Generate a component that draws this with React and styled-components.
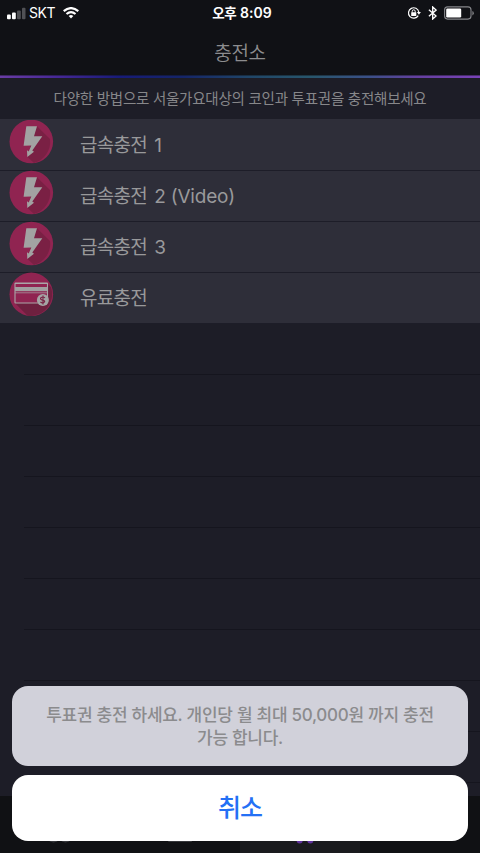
import React from "react";
import styled, { createGlobalStyle } from "styled-components";

const GlobalStyle = createGlobalStyle`
  * { box-sizing: border-box; }
  body {
    margin: 0;
    background: #1d1d27;
    font-family: Inter, "Noto Sans CJK KR", sans-serif;
  }
`;

const Screen = styled.div`
  position: relative;
  display: flex;
  flex-direction: column;
  width: 480px;
  height: 853px;
  overflow: hidden;
  background: #1d1d27;
`;

const StatusBar = styled.header`
  display: grid;
  grid-template-columns: 1fr auto 1fr;
  align-items: center;
  height: 25px;
  padding: 0 6px 0 7px;
  background: #101115;
  color: #fff;
`;

const StatusGroup = styled.div`
  display: flex;
  align-items: center;
  justify-content: ${(p) => (p.$end ? "flex-end" : "flex-start")};
  height: 25px;
`;

const Carrier = styled.span`
  margin: 0 8px 0 3px;
  font-size: 14px;
  line-height: 24px;
  letter-spacing: -0.4px;
`;

const Clock = styled.time`
  padding-left: 3px;
  font-size: 14px;
  font-weight: 600;
  line-height: 25px;
  white-space: nowrap;
`;

const Meridiem = styled.span`
  margin-right: 4px;
  font-size: 13.5px;
  letter-spacing: -0.5px;
`;

const NavBar = styled.div`
  height: 50px;
  padding-top: 2px;
  background: #101115;
  color: #8d8d8f;
  font-size: 19px;
  font-weight: 350;
  line-height: 53px;
  letter-spacing: -0.3px;
  text-align: center;
`;

const GradientLine = styled.div`
  height: 3px;
  flex: none;
  background: linear-gradient(90deg, #6a3da5 0%, #462896 12%, #171b78 25%, #152568 38%, #204668 52%, #28566c 65%, #3b5088 77%, #6540a0 87%, #7a43b8 100%);
  border-top: 1px solid rgba(16, 17, 21, 0.45);
`;

const Intro = styled.p`
  flex: none;
  height: 41px;
  margin: 0;
  color: #87878a;
  font-size: 14.5px;
  line-height: 41px;
  letter-spacing: -0.24px;
  text-align: center;
  white-space: nowrap;
`;

const List = styled.ul`
  flex: 1;
  min-height: 0;
  margin: 0;
  padding: 0;
  overflow: hidden;
  border-top: 1px solid #2e2e39;
  list-style: none;
`;

const Row = styled.li`
  display: flex;
  align-items: flex-start;
  height: 51px;
  padding-left: 9px;
  background: #2e2e39;
  border-bottom: 1px solid #1d1d28;
  color: #99999b;
`;

const RowBadge = styled.div`
  flex: none;
  margin-top: -1px;
`;

const RowLabel = styled.span`
  margin-left: 26px;
  font-size: 19px;
  line-height: 52px;
  letter-spacing: -0.7px;
  white-space: nowrap;
`;

const RowSuffix = styled.span`
  margin-left: 7px;
  font-size: 19px;
  letter-spacing: -0.2px;
`;

const EmptyRow = styled.li`
  height: 51px;
  margin-left: 24px;
  border-bottom: 1px solid #15151e;
`;

const TabBar = styled.nav`
  display: grid;
  grid-template-columns: repeat(4, 1fr);
  flex: none;
  height: 57px;
  background: #101114;
`;

const Tab = styled.div`
  display: flex;
  align-items: flex-start;
  justify-content: center;
  padding-top: 24px;
  background: ${(p) => (p.$active ? "#1a1b1e" : "transparent")};
`;

const ActionSheet = styled.div`
  position: absolute;
  left: 12px;
  right: 12px;
  bottom: 12px;
  display: flex;
  flex-direction: column;
  gap: 9px;
`;

const Message = styled.div`
  display: flex;
  flex-direction: column;
  align-items: center;
  height: 80px;
  padding-top: 18px;
  border-radius: 16px;
  background: #d1d1da;
  color: #8b8b8d;
  font-size: 17px;
  font-weight: 500;
  line-height: 23px;
  letter-spacing: -0.28px;
  white-space: nowrap;
`;

const Cancel = styled.button`
  height: 66px;
  padding: 1px 0 0;
  border: 0;
  border-radius: 16px;
  background: #fff;
  color: #2470f5;
  font-family: inherit;
  font-size: 25px;
  font-weight: 500;
  line-height: 65px;
  letter-spacing: -0.9px;
`;

const Icon = styled.svg`
  display: block;
  flex: none;
  margin-left: ${(p) => p.$gap || 0}px;
`;

const Signal = () => (
  <Icon width="19" height="13" viewBox="0 0 19 13">
    <rect x="0" y="7.6" width="3.8" height="4.6" rx="1" fill="#fff" />
    <rect x="5" y="5.6" width="3.8" height="6.6" rx="1" fill="#fff" />
    <rect x="10" y="3.4" width="3.8" height="8.8" rx="1" fill="#505155" />
    <rect x="15" y="0.8" width="3.5" height="11.4" rx="1" fill="#505155" />
  </Icon>
);

const Wifi = () => (
  <Icon width="16" height="12" viewBox="0 0 16 12" fill="none" stroke="#fff" strokeWidth="2.2">
    <path d="M.7 4.1Q8-1.9 15.3 4.1" />
    <path d="M3.5 7Q8 3.2 12.5 7" />
    <path d="M5.7 9Q8 7.2 10.3 9L8 11.5Z" fill="#fff" stroke="none" />
  </Icon>
);

const RotationLock = () => (
  <Icon width="14" height="14" viewBox="0 0 14 14" fill="none" stroke="#fff">
    <path d="M11.2 9.6A5.2 5.2 0 1 1 11.8 6" strokeWidth="1.2" />
    <path d="M9.9 6H13.9L11.9 8.8Z" fill="#fff" stroke="none" />
    <rect x="4.2" y="6.2" width="5.1" height="3.7" rx="0.5" fill="#fff" stroke="none" />
    <path d="M5.2 6.7V5.3a1.5 1.5 0 0 1 3 0V6.7" />
  </Icon>
);

const Bluetooth = () => (
  <Icon $gap={7} width="9" height="14" viewBox="0 0 9 14" fill="none" stroke="#fff" strokeWidth="1.35">
    <path d="M.9 3.8 8.1 10 4.7 13V1L8.1 4.1.9 10.3" />
  </Icon>
);

const Battery = () => (
  <Icon $gap={7} width="30" height="14" viewBox="0 0 30 14">
    <rect x="0.6" y="0.9" width="26.4" height="12.2" rx="3" fill="none" stroke="#85868a" strokeWidth="1.1" />
    <rect x="2.2" y="2.5" width="15" height="9" rx="1.2" fill="#fff" />
    <path d="M28.4 5v4.4q1.4-.6 1.4-2.2T28.4 5Z" fill="#85868a" />
  </Icon>
);

const BoltBadge = () => (
  <Icon width="45" height="46" viewBox="0 0 45 46">
    <circle cx="22.3" cy="22.5" r="21.8" fill="#902451" />
    <path d="M28 7.3 41 20A21.8 21.8 0 0 1 25 43.9L18.5 38 24 18Z" fill="#7a2044" />
    <path d="M17.3 7.3H28L25 17.2H33.3L23.3 31.5 25 32.7 18.3 38 18 31.3 19.7 32.5 22.3 26.4 14.6 26.7Z" fill="#a2a2a2" />
  </Icon>
);

const CardBadge = () => (
  <Icon width="45" height="46" viewBox="0 0 45 46">
    <circle cx="22.3" cy="22.3" r="21.8" fill="#902451" />
    <path d="M38.8 12 42 15.2A21.8 21.8 0 0 1 18.5 43.7L6 31H35L38.8 27Z" fill="#6e203f" />
    <rect x="6" y="11" width="32.5" height="20" rx="0.5" fill="#902451" stroke="#aaa6a8" strokeWidth="1.1" />
    <path d="M6 11.5H38.5" stroke="#aaa6a8" strokeWidth="1.2" />
    <rect x="6" y="15" width="32.5" height="4.2" fill="#a2a0a1" />
    <path d="M6 20.8H38.5" stroke="#aaa6a8" strokeWidth="0.7" />
    <circle cx="33.9" cy="28" r="6" fill="#a5a4a5" />
    <path d="M36 25.9q-2-1.5-3.7-.4c-1.7 1.2-.2 2.4 1.3 2.6 2.4.4 2.6 1.5 1.2 2.4q-1.6.9-3.4-.5M34 23.5v9" fill="none" stroke="#7a2445" strokeWidth="1.15" />
  </Icon>
);

const TabPeople = () => (
  <Icon width="26" height="23" viewBox="0 0 26 23" fill="#36373b">
    <circle cx="6.5" cy="14.4" r="8" /><circle cx="18.5" cy="14.4" r="8" />
  </Icon>
);

const TabCard = () => (
  <Icon width="24" height="22" viewBox="0 0 24 22">
    <rect width="24" height="22" rx="1" fill="#36373b" />
  </Icon>
);

const TabCart = () => (
  <Icon $gap={9} width="20" height="24" viewBox="0 0 20 24" fill="#6234a0">
    <path d="M2 5h17l-3 10H5Z" />
    <circle cx="4.7" cy="20.5" r="3" /><circle cx="15.3" cy="20.5" r="3" />
  </Icon>
);

const options = [
  { label: "급속충전", suffix: "1", Badge: BoltBadge },
  { label: "급속충전", suffix: "2 (Video)", Badge: BoltBadge },
  { label: "급속충전", suffix: "3", Badge: BoltBadge },
  { label: "유료충전", Badge: CardBadge },
];

export default function App() {
  return (
    <>
      <GlobalStyle />
      <Screen>
        <StatusBar>
          <StatusGroup>
            <Signal />
            <Carrier>SKT</Carrier>
            <Wifi />
          </StatusGroup>
          <Clock><Meridiem>오후</Meridiem>8:09</Clock>
          <StatusGroup $end>
            <RotationLock />
            <Bluetooth />
            <Battery />
          </StatusGroup>
        </StatusBar>
        <NavBar>충전소</NavBar>
        <GradientLine />
        <Intro>다양한 방법으로 서울가요대상의 코인과 투표권을 충전해보세요</Intro>
        <List>
          {options.map(({ label, suffix, Badge }) => (
            <Row key={label + suffix}>
              <RowBadge><Badge /></RowBadge>
              <RowLabel>
                {label}
                {suffix && <RowSuffix>{suffix}</RowSuffix>}
              </RowLabel>
            </Row>
          ))}
          {Array.from({ length: 10 }, (_, i) => (
            <EmptyRow key={i} />
          ))}
        </List>
        <TabBar>
          <Tab><TabPeople /></Tab>
          <Tab><TabCard /></Tab>
          <Tab $active><TabCart /></Tab>
          <Tab />
        </TabBar>
        <ActionSheet>
          <Message>
            <span>투표권 충전 하세요. 개인당 월 최대 50,000원 까지 충전</span>
            <span>가능 합니다.</span>
          </Message>
          <Cancel>취소</Cancel>
        </ActionSheet>
      </Screen>
    </>
  );
}
